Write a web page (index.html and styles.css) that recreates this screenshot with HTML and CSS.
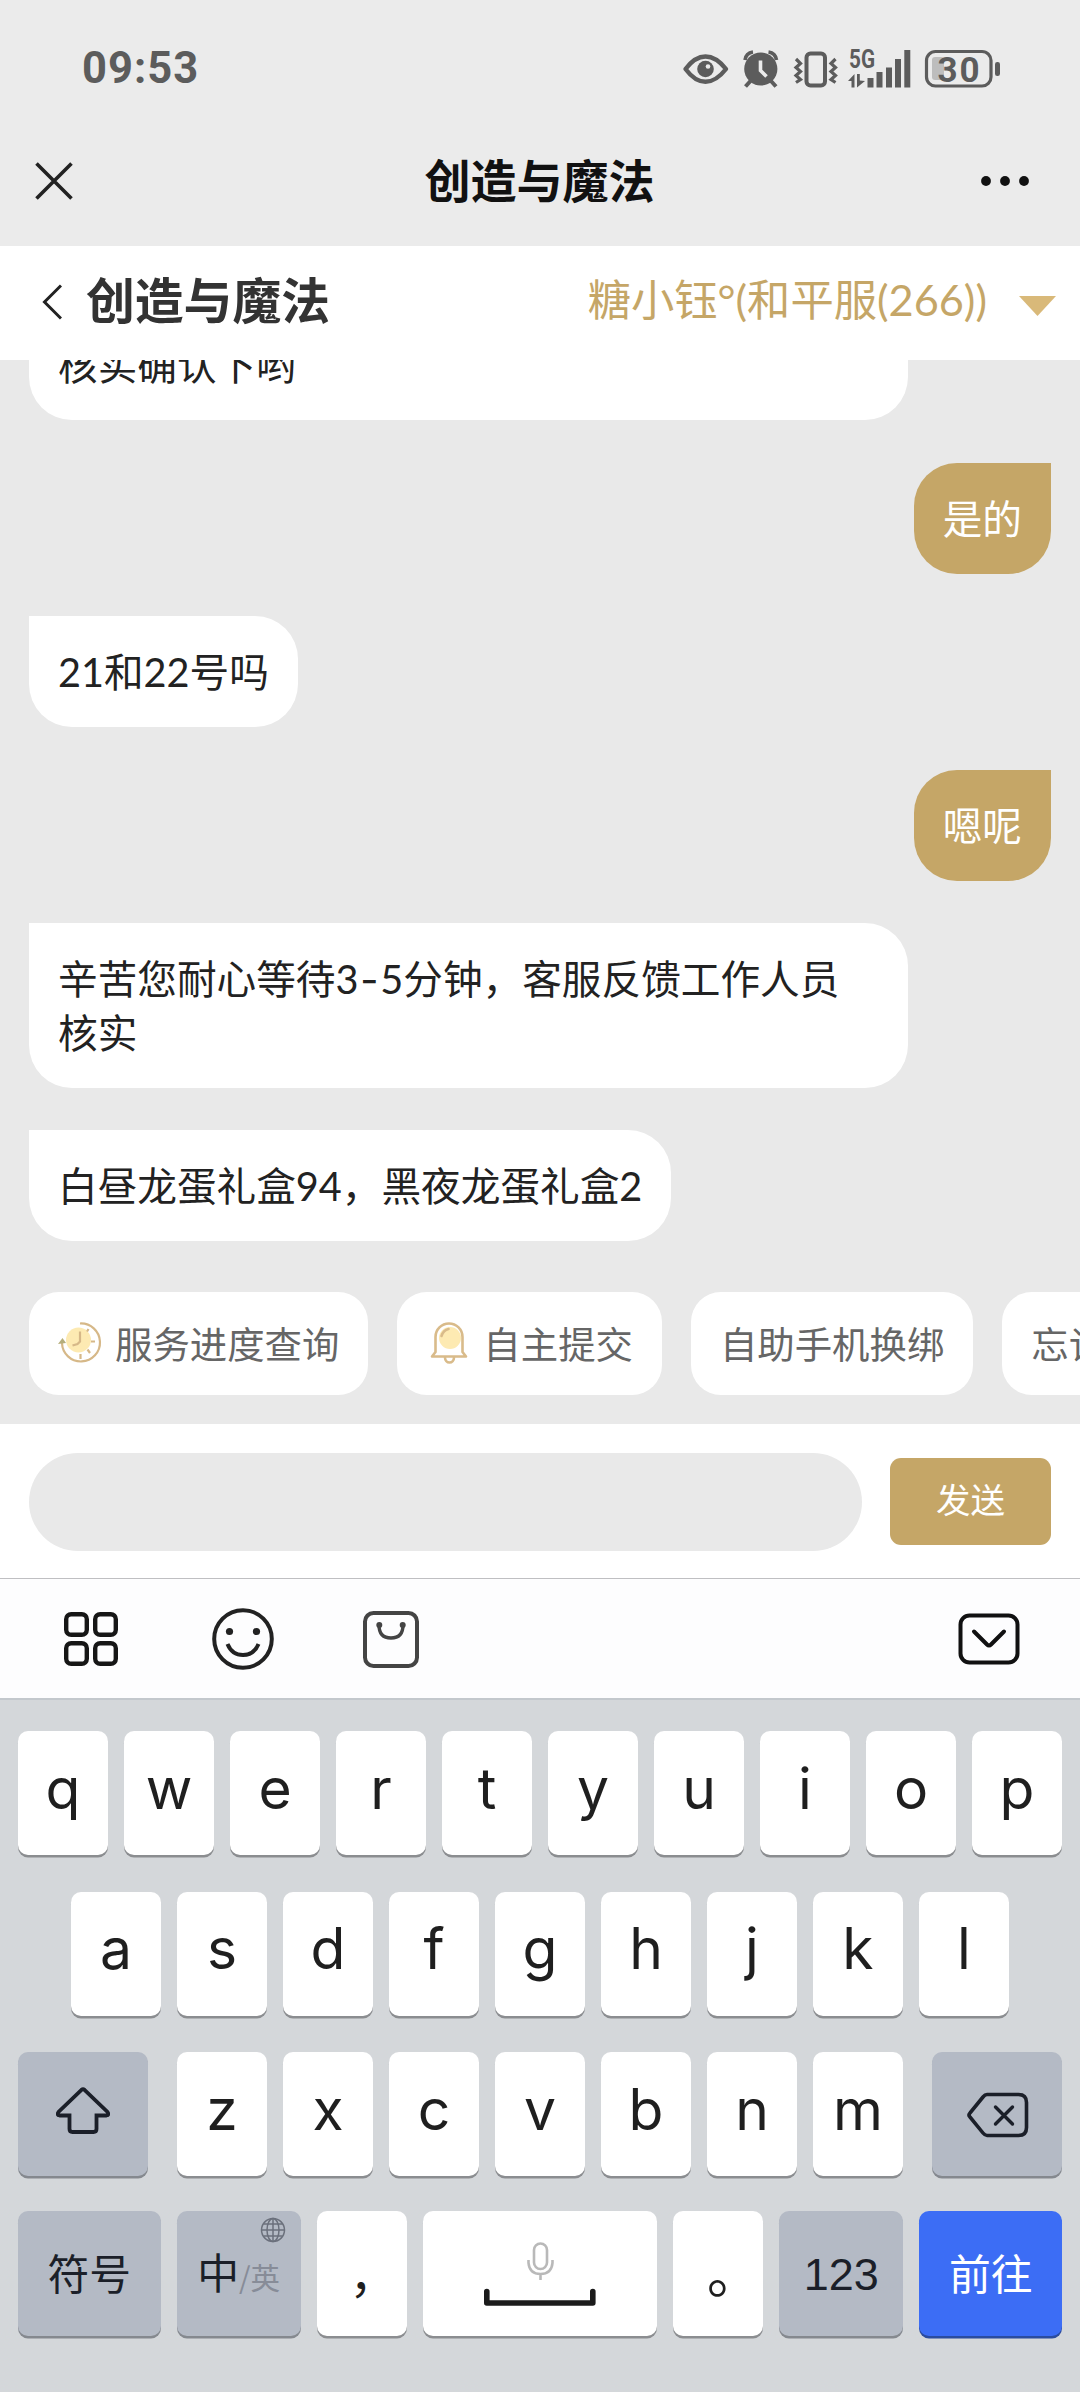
FILE: index.html
```html
<!DOCTYPE html>
<html lang="zh-CN">
<head>
<meta charset="utf-8">
<title>创造与魔法</title>
<link rel="stylesheet" href="styles.css">
</head>
<body>
<div class="statusbar">
  <span class="clock">09:53</span>
  <svg class="status-icons" width="320" height="42" viewBox="682 46 320 42">
    <!-- eye -->
    <path d="M685.5 68Q695 55.500 705.500 55.500T726 68Q716 80.800 705.500 80.800T685.500 68Z" fill="none" stroke="#5c5c5c" stroke-width="4.400" stroke-linejoin="round"/>
    <circle cx="705.500" cy="68" r="8.300" fill="#5c5c5c"/><circle cx="708" cy="65.500" r="2.300" fill="#ebebeb"/>
    <!-- alarm -->
    <g fill="none" stroke="#5c5c5c" stroke-width="4"><path d="M745 59Q746 52 753 51M776.500 59Q775.500 52 768.500 51" stroke-width="3.600"/><path d="M750.500 80l-5 5.500M771 80l5 5.500"/></g>
    <circle cx="760.800" cy="68" r="16.600" fill="#5c5c5c"/>
    <path d="M760.500 59.500v10l6 6" fill="none" stroke="#ebebeb" stroke-width="3.600"/>
    <!-- vibrate -->
    <rect x="806.500" y="52.500" width="18.500" height="32" rx="4" fill="none" stroke="#5c5c5c" stroke-width="4"/>
    <path d="M796 58l4.500 4.500-4.500 4 4.500 4-4.500 4 4.500 4-4.500 3M835.500 58l-4.500 4.500 4.500 4-4.500 4 4.500 4-4.500 4 4.500 3" fill="none" stroke="#5c5c5c" stroke-width="3.200"/>
    <!-- mobile signal -->
    <text class="net" x="849" y="66.500" textLength="26" lengthAdjust="spacingAndGlyphs">5G</text>
    <path d="M867.500 77h6v9.500h-6zM876.500 71h6v15.500h-6zM886 66.500h6v20h-6zM895 58h6v28.500h-6zM904.300 49h6v37.500h-6zM848 80l6.500-7v13.500h-3V80zM857 73h2.800v6.500l5.200.5-8 6.500z" fill="#5c5c5c"/>
    <!-- battery -->
    <rect x="932" y="56" width="12" height="23" rx="3" fill="#bdbdbd"/>
    <rect x="926.500" y="50.500" width="64.500" height="34.500" rx="9" fill="none" stroke="#5c5c5c" stroke-width="3.200"/>
    <rect x="995" y="61" width="5" height="14" rx="2.300" fill="#5c5c5c"/>
    <text class="pct" x="937.500" y="80.500" textLength="42" lengthAdjust="spacing">30</text>
  </svg>
</div>
<div class="navbar">
  <svg width="38" height="38" viewBox="0 0 38 38"><path d="M1.500 1.500l35 35M36.500 1.500l-35 35" stroke="#222" stroke-width="3.600"/></svg>
  <h1>创造与魔法</h1>
  <svg width="50" height="12" viewBox="0 0 50 12" fill="#111"><circle cx="6" cy="6" r="4.900"/><circle cx="25" cy="6" r="4.900"/><circle cx="44" cy="6" r="4.900"/></svg>
</div>
<header class="game">
  <svg width="20" height="36" viewBox="0 0 20 36"><path d="M19 1.500L2.500 18 19 34.500" fill="none" stroke="#222" stroke-width="3"/></svg>
  <h2>创造与魔法</h2>
  <span class="role">糖小钰°(和平服(266))</span>
  <svg width="37" height="20" viewBox="0 0 37 20"><path d="M0 0h37L18.500 20z" fill="#d9b979"/></svg>
</header>
<main class="chat">
  <div class="msg wide">核实确认下哟</div>
  <div class="msg mine">是的</div>
  <div class="msg">21和22号吗</div>
  <div class="msg mine">嗯呢</div>
  <div class="msg wide">辛苦您耐心等待3<span class="dash">-</span>5分钟，客服反馈工作人员<br>核实</div>
  <div class="msg">白昼龙蛋礼盒94，黑夜龙蛋礼盒2</div>
</main>
<nav class="chips">
  <span class="chip"><svg width="44" height="43" viewBox="0 0 44 43"><circle cx="20.500" cy="19" r="12.500" fill="#fdeab2"/><g fill="none" stroke="#d6b888" stroke-width="2.200"><path d="M22 2.500A19 19 0 1 1 4 22"/><path d="M22 10.500v10l-2.500 2.500-5 1.500M29 10.500l1.500-2.500M33 20.500h4M29.500 28.500l2.500 3.500M22.500 33v5"/></g><path d="M0 23l4.500-6 3.500 5z" fill="#b5ae7c"/></svg>服务进度查询</span>
  <span class="chip"><svg width="44" height="43" viewBox="0 0 44 43"><circle cx="24" cy="17" r="11" fill="#fdeab2"/><g fill="none" stroke="#d9bb8a" stroke-width="2.600" stroke-linecap="round" stroke-linejoin="round"><path d="M9.500 31V16a13.500 13.500 0 0 1 27 0v15l3.500 4.500H6z"/><path d="M19 36.500a4.500 5 0 0 0 9 0M15.500 15q2-6 7-7"/></g></svg>自主提交</span>
  <span class="chip">自助手机换绑</span>
  <span class="chip">忘记密码</span>
</nav>
<div class="composer"><div class="field"></div><div class="send">发送</div></div>
<div class="tools">
  <svg width="54" height="54" viewBox="0 0 54 54" fill="none" stroke="#161616" stroke-width="4.400"><rect x="2.200" y="2.200" width="20.600" height="20.600" rx="5"/><rect x="31.200" y="2.200" width="20.600" height="20.600" rx="5"/><rect x="2.200" y="31.200" width="20.600" height="20.600" rx="5"/><rect x="31.200" y="31.200" width="20.600" height="20.600" rx="5"/></svg>
  <svg width="62" height="62" viewBox="0 0 62 62" fill="none" stroke="#222" stroke-width="4"><circle cx="31" cy="31" r="28.800"/><path d="M15.500 36q4.500 11 15.500 11t15.500-11"/><g fill="#222" stroke="none"><circle cx="17.500" cy="23.500" r="3.600"/><circle cx="44.500" cy="23.500" r="3.600"/></g></svg>
  <svg width="58" height="58" viewBox="0 0 58 58" fill="none" stroke="#444" stroke-width="4"><rect x="3" y="3" width="52" height="53" rx="8.500"/><path d="M17 15q0 13 12 13t12-13" stroke-width="3.400"/><g fill="#444" stroke="none"><circle cx="17.300" cy="15" r="3"/><circle cx="40.700" cy="15" r="3"/></g></svg>
  <svg class="hide" width="62" height="52" viewBox="0 0 62 52" fill="none" stroke="#111" stroke-width="4"><rect x="2.500" y="2.500" width="57" height="47" rx="9"/><path d="M16 18.500l13 13q2 2 4 0l13-13" stroke-linecap="round"/></svg>
</div>
<section class="keyboard">
  <div class="row">
    <b class="key">q</b><b class="key">w</b><b class="key">e</b><b class="key">r</b><b class="key">t</b><b class="key">y</b><b class="key">u</b><b class="key">i</b><b class="key">o</b><b class="key">p</b>
  </div>
  <div class="row">
    <b class="key">a</b><b class="key">s</b><b class="key">d</b><b class="key">f</b><b class="key">g</b><b class="key">h</b><b class="key">j</b><b class="key">k</b><b class="key">l</b>
  </div>
  <div class="row spread">
    <b class="key fn shift"><svg width="54" height="47" viewBox="0 0 54 47"><path d="M25.500 2.800q1.500-1.300 3 0L51.500 25q2 3-1 3.500H40.500V42q0 3-3 3h-21q-3 0-3-3V28.500H3.500q-3-.5-1-3.500z" fill="none" stroke="#1b1f29" stroke-width="3.800"/></svg></b>
    <div class="mid"><b class="key">z</b><b class="key">x</b><b class="key">c</b><b class="key">v</b><b class="key">b</b><b class="key">n</b><b class="key">m</b></div>
    <b class="key fn shift del"><svg width="62" height="46" viewBox="0 0 62 46"><path d="M20 2.500h31.500q8 0 8 8v25q0 8-8 8H20q-2 0-4-2.500L3 25q-2-2 0-4L16 5q2-2.500 4-2.500z" fill="none" stroke="#1b1f29" stroke-width="3.600"/><path d="M28.500 15l17 17M45.500 15l-17 17" stroke="#1b1f29" stroke-width="3.400" stroke-linecap="round"/></svg></b>
  </div>
  <div class="row tall">
    <b class="key fn w3 zh">符号</b>
    <b class="key fn w2 zh lang">中<small>/英</small><svg class="globe" width="26" height="26" viewBox="0 0 26 26" fill="none" stroke="#6b707c" stroke-width="1.500"><circle cx="13" cy="13" r="11.500"/><ellipse cx="13" cy="13" rx="6" ry="11.500"/><path d="M13 1.500v23M1.500 13h23M3.500 7h19M3.500 19h19"/></svg></b>
    <b class="key punct comma">，</b>
    <b class="key space"><svg width="112" height="64" viewBox="0 0 112 64" fill="none"><g stroke="#b9b9b9" stroke-width="2.600"><rect x="50" y="1.500" width="13" height="25.500" rx="6.500"/><path d="M44.500 18v3q1 11 12 11t12-11v-3M56.500 32v6"/></g><path d="M2.800 49.500V61h106V49.500" stroke="#1b1b1b" stroke-width="5.600" stroke-linecap="round" stroke-linejoin="round"/></svg></b>
    <b class="key punct stop">。</b>
    <b class="key fn w2 num">123</b>
    <b class="key w3 zh go">前往</b>
  </div>
</section>
</body>
</html>
```
FILE: styles.css
```css
* { box-sizing: border-box; }
body {
  margin: 0;
  width: 1080px;
  height: 2392px;
  overflow: hidden;
  display: flex;
  flex-direction: column;
  background: #ebebeb;
  color: #222;
  font-family: Lato, "Noto Sans CJK SC", sans-serif;
}
svg { display: block; flex: none; }
h1, h2 { margin: 0; font-family: "Noto Sans CJK SC", sans-serif; white-space: nowrap; }

.statusbar {
  height: 116px;
  padding: 20px 78px 0 82px;
  display: flex;
  align-items: center;
  justify-content: space-between;
}
.clock { font: 700 43.500px/50px Roboto, sans-serif; letter-spacing: 1px; color: #5c5c5c; padding-top: 2px; }
.net { font: 700 26px Roboto, sans-serif; fill: #5c5c5c; }
.pct { font: 700 35px Roboto, sans-serif; fill: #5c5c5c; }

.navbar {
  height: 130px;
  padding: 0 50px 0 35px;
  display: flex;
  align-items: center;
  justify-content: space-between;
}
.navbar h1 { font-size: 46px; line-height: 60px; font-weight: 700; color: #111; padding: 0 0 6px 26px; }

.game {
  height: 114px;
  background: #fff;
  display: flex;
  align-items: center;
  padding: 0 24px 0 42px;
}
.game h2 { font-size: 48.800px; line-height: 60px; margin-left: 24px; color: #333; padding-bottom: 11px; }
.role { margin-left: auto; margin-right: 32px; font-size: 43.300px; line-height: 60px; color: #c5a667; padding-bottom: 8px; white-space: nowrap; }
.game > svg { position: relative; top: 3px; }
.game > svg:first-child { top: -1px; }

.chat {
  height: 881.300px;
  flex: none;
  overflow: hidden;
  background: #e9e9e9;
  padding: 0 29px;
  display: flex;
  flex-direction: column;
  justify-content: flex-end;
  align-items: flex-start;
  gap: 42.400px;
}
.msg {
  flex: none;
  background: #fff;
  border-radius: 0 43px 43px 43px;
  padding: 29px;
  font-size: 39.650px;
  line-height: 53.200px;
  white-space: nowrap;
}
.msg.wide { width: 879px; }
.msg.mine { align-self: flex-end; background: #c5a667; color: #fff; border-radius: 43px 0 43px 43px; }
.dash { font-family: Inter, sans-serif; line-height: 1; padding: 0 1.800px; }

.chips {
  flex: none;
  height: 182.400px;
  padding: 50.300px 0 0 29px;
  display: flex;
  gap: 29px;
  overflow: hidden;
  background: #e9e9e9;
}
.chip {
  flex: none;
  height: 103.700px;
  padding: 0 29px 1px;
  border-radius: 30px;
  background: #fff;
  display: flex;
  align-items: center;
  gap: 13px;
  font-size: 37.400px;
  color: #666;
}

.composer {
  flex: none;
  height: 155.300px;
  background: #fff;
  border-bottom: 1.500px solid #bfbfc2;
  padding: 2px 29px 0;
  display: flex;
  align-items: center;
  justify-content: space-between;
}
.field { width: 833px; height: 97.500px; border-radius: 49px; background: #e9e9e9; }
.send {
  width: 161px;
  height: 87px;
  border-radius: 11px;
  background: #c5a667;
  color: #fff;
  font-size: 34.500px;
  line-height: 84px;
  text-align: center;
}

.tools {
  flex: none;
  height: 121px;
  background: #fdfdfe;
  border-bottom: 2px solid #c3c8cd;
  display: flex;
  align-items: center;
  padding: 1.500px 60px 0 64px;
}
.tools svg:nth-child(2) { margin-left: 94px; }
.tools svg:nth-child(3) { margin-left: 88px; }
.tools .hide { margin-left: auto; }

.keyboard {
  flex: 1;
  background: #d4d7da;
  padding: 31.300px 18px 0;
  display: flex;
  flex-direction: column;
  gap: 36.400px;
}
.row { display: flex; justify-content: center; gap: 16px; height: 124px; }
.row.spread { justify-content: space-between; }
.row.tall { height: 125px; margin-top: -1px; justify-content: space-between; }
.mid { display: flex; gap: 16px; }
.key {
  width: 90px;
  height: 100%;
  border-radius: 10px;
  background: #fff;
  box-shadow: 0 2.500px 0 #8b8d90;
  font: 400 57px/1 Inter, sans-serif;
  color: #1f1f1f;
  display: flex;
  align-items: center;
  justify-content: center;
  padding-bottom: 10px;
}
.fn { background: #b4bac5; color: #1b1f29; box-shadow: 0 2.500px 0 #85898f; }
.shift { width: 130px; padding-bottom: 8px; }
.del { padding: 1px 0 0 1px; }
.w3 { width: 142.500px; }
.w2 { width: 124px; }
.zh { font: 400 41.800px/60px "Noto Sans CJK SC", sans-serif; padding-bottom: 4px; }
.lang { position: relative; align-items: baseline; padding-top: 30px; }
.lang small { font-size: 29.500px; color: #878c98; }
.globe { position: absolute; right: 15px; top: 6px; }
.punct { font: 400 54px/60px "Noto Sans CJK TC", sans-serif; padding: 25px 2px 0 0; }
.comma { font-size: 48px; }
.space { width: 234px; padding: 0 0 0 1px; }
.num { font: 400 45px/60px "Liberation Sans", sans-serif; padding: 2px 0 0; }
.go { background: #3c6df5; color: #fff; box-shadow: 0 2.500px 0 #2b4c9f; }
```
